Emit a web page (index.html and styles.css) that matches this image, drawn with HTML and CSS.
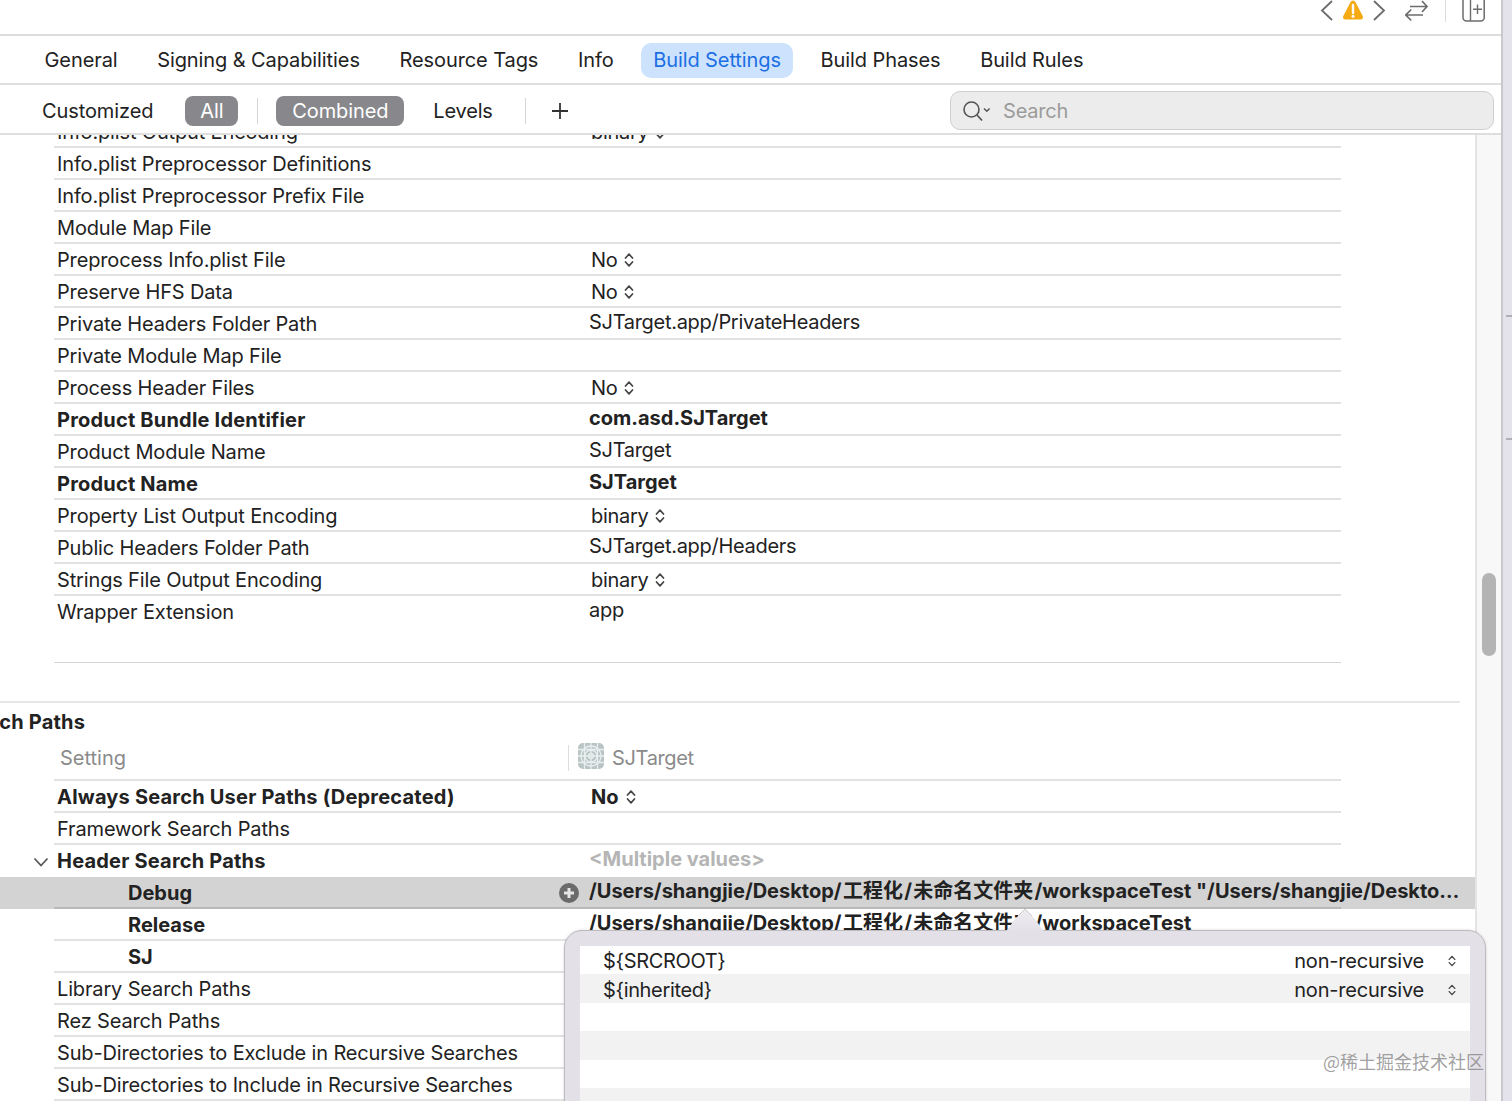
FILE: index.html
```html
<!DOCTYPE html>
<html lang="en">
<head>
<meta charset="utf-8">
<title>Build Settings</title>
<link rel="stylesheet" href="styles.css">
</head>
<body>
<svg class="defs" width="0" height="0" aria-hidden="true">
  <symbol id="updown" viewBox="0 0 10 16"><path d="M1.500 6 5 2.200 8.500 6M1.500 10 5 13.800 8.500 10" fill="none" stroke="currentColor" stroke-width="1.700" stroke-linecap="round" stroke-linejoin="round"/></symbol>
</svg>
<div class="page">
  <div class="editor">
    <header class="topbar">
      <svg class="ti" width="14" height="22" viewBox="0 0 14 22"><path d="M12 1 2 10.500 12 20" fill="none" stroke="#6c6c6c" stroke-width="1.800"/></svg>
      <svg class="ti warn" width="22" height="22" viewBox="0 0 22 22"><path d="M11 .500C9.800.500 9 1.200 8.300 2.500L1.300 16c-.8 1.700.2 3.500 2 3.500h15.400c1.800 0 2.800-1.800 2-3.500L13.700 2.500C13 1.200 12.200.500 11 .500Z" fill="#f5a913"/><path d="M11 5v8" stroke="#fff" stroke-width="2.400" stroke-linecap="round"/><circle cx="11" cy="16.200" r="1.500" fill="#fff"/></svg>
      <svg class="ti" width="14" height="22" viewBox="0 0 14 22"><path d="M2 1 12 10.500 2 20" fill="none" stroke="#6c6c6c" stroke-width="1.800"/></svg>
      <svg class="ti swap" width="24" height="24" viewBox="0 0 24 24"><path d="M5 6.500H22M17 1l5 5.500-5 5.500M.8 15H18M6.300 9.500.8 15l5.500 5.500" fill="none" stroke="#6c6c6c" stroke-width="1.700"/></svg>
      <span class="ti-div"></span>
      <svg class="ti add" width="24" height="24" viewBox="0 0 24 24"><rect x="2" y="-4" width="21.200" height="25" rx="3.500" fill="none" stroke="#6c6c6c" stroke-width="1.500"/><path d="M9.500 0v21M16.500 4.500v9.500M12 9.200h9" fill="none" stroke="#6c6c6c" stroke-width="1.400"/></svg>
    </header>
    <nav class="tabs">
      <a class="tab">General</a>
      <a class="tab">Signing &amp; Capabilities</a>
      <a class="tab">Resource Tags</a>
      <a class="tab">Info</a>
      <a class="tab active">Build Settings</a>
      <a class="tab">Build Phases</a>
      <a class="tab">Build Rules</a>
    </nav>
    <div class="filters">
      <span class="f f-custom">Customized</span>
      <span class="f pill p-all">All</span>
      <span class="fdiv d1"></span>
      <span class="f pill p-comb">Combined</span>
      <span class="f f-levels">Levels</span>
      <span class="fdiv d2"></span>
      <svg class="plus" width="18" height="18" viewBox="0 0 18 18"><path d="M9 1v16M1 9h16" stroke="#333" stroke-width="1.800"/></svg>
      <div class="search">
        <svg width="30" height="24" viewBox="0 0 30 24"><circle cx="9.500" cy="10.500" r="7.500" fill="none" stroke="#555" stroke-width="1.600"/><path d="m15 16 5 5.500" stroke="#555" stroke-width="1.800"/><path d="m22 9.500 2.800 2.800 2.800-2.800" fill="none" stroke="#555" stroke-width="1.500"/></svg>
        <span>Search</span>
      </div>
    </div>
    <div class="main">
      <div class="scroll">
        <div class="rows first">
          <div class="row"><div class="n">Info.plist Output Encoding</div><div class="v pop">binary <svg class="ud"><use href="#updown"/></svg></div></div>
          <div class="row"><div class="n">Info.plist Preprocessor Definitions</div><div class="v"></div></div>
          <div class="row"><div class="n">Info.plist Preprocessor Prefix File</div><div class="v"></div></div>
          <div class="row"><div class="n">Module Map File</div><div class="v"></div></div>
          <div class="row"><div class="n">Preprocess Info.plist File</div><div class="v pop">No <svg class="ud"><use href="#updown"/></svg></div></div>
          <div class="row"><div class="n">Preserve HFS Data</div><div class="v pop">No <svg class="ud"><use href="#updown"/></svg></div></div>
          <div class="row"><div class="n">Private Headers Folder Path</div><div class="v">SJTarget.app/PrivateHeaders</div></div>
          <div class="row"><div class="n">Private Module Map File</div><div class="v"></div></div>
          <div class="row"><div class="n">Process Header Files</div><div class="v pop">No <svg class="ud"><use href="#updown"/></svg></div></div>
          <div class="row b"><div class="n">Product Bundle Identifier</div><div class="v">com.asd.SJTarget</div></div>
          <div class="row"><div class="n">Product Module Name</div><div class="v">SJTarget</div></div>
          <div class="row b"><div class="n">Product Name</div><div class="v">SJTarget</div></div>
          <div class="row"><div class="n">Property List Output Encoding</div><div class="v pop">binary <svg class="ud"><use href="#updown"/></svg></div></div>
          <div class="row"><div class="n">Public Headers Folder Path</div><div class="v">SJTarget.app/Headers</div></div>
          <div class="row"><div class="n">Strings File Output Encoding</div><div class="v pop">binary <svg class="ud"><use href="#updown"/></svg></div></div>
          <div class="row last"><div class="n">Wrapper Extension</div><div class="v">app</div></div>
        </div>
        <div class="list-end"></div>
        <section class="section">
          <h2 class="sec-title">Search Paths</h2>
          <div class="head">
            <div class="h-name">Setting</div>
            <div class="h-val">
              <svg class="appicon" width="26" height="26" viewBox="0 0 26 26"><rect width="26" height="26" rx="5" fill="#b9c4c4"/><g fill="none" stroke="#e8eeee" stroke-width="1.300"><circle cx="13" cy="13" r="10"/><circle cx="13" cy="13" r="6"/><circle cx="13" cy="13" r="2.500"/><path d="M0 6.500h26M0 13h26M0 19.500h26M6.500 0v26M13 0v26M19.500 0v26"/></g></svg>
              <span>SJTarget</span>
            </div>
          </div>
          <div class="row b"><div class="n">Always Search User Paths (Deprecated)</div><div class="v pop">No <svg class="ud"><use href="#updown"/></svg></div></div>
          <div class="row"><div class="n">Framework Search Paths</div><div class="v"></div></div>
          <div class="row b noline">
            <svg class="disc" width="16" height="10" viewBox="0 0 16 10"><path d="m1.500 1.500 6.500 7 6.500-7" fill="none" stroke="#555" stroke-width="1.700"/></svg>
            <div class="n">Header Search Paths</div><div class="v multi">&lt;Multiple values&gt;</div>
          </div>
          <div class="hl">
            <div class="row b sub wide">
              <div class="n"><span>Debug</span><svg class="addc" width="20" height="20" viewBox="0 0 20 20"><circle cx="10" cy="10" r="10" fill="#6b6b6b"/><path d="M10 5v10M5 10h10" stroke="#e6e6e6" stroke-width="3"/></svg></div>
              <div class="v clip">/Users/shangjie/Desktop/<span class="cjk">工程化</span>/<span class="cjk">未命名文件夹</span>/workspaceTest "/Users/shangjie/Desktop/工程化/未命名文件夹/workspaceTest"</div>
            </div>
          </div>
          <div class="row b sub"><div class="n">Release</div><div class="v">/Users/shangjie/Desktop/<span class="cjk">工程化</span>/<span class="cjk">未命名文件夹</span>/workspaceTest</div></div>
          <div class="row b sub"><div class="n">SJ</div><div class="v"></div></div>
          <div class="row"><div class="n">Library Search Paths</div><div class="v"></div></div>
          <div class="row"><div class="n">Rez Search Paths</div><div class="v"></div></div>
          <div class="row"><div class="n">Sub-Directories to Exclude in Recursive Searches</div><div class="v"></div></div>
          <div class="row"><div class="n">Sub-Directories to Include in Recursive Searches</div><div class="v"></div></div>
        </section>
      </div>
      <div class="track"><div class="thumb"></div></div>
    </div>
    <div class="popover">
      <svg class="arrow" width="44" height="24" viewBox="0 0 44 24"><defs><linearGradient id="ag" x1="0" y1="0" x2="0" y2="1"><stop offset="0" stop-color="#efecf0"/><stop offset="1" stop-color="#e4e0e8"/></linearGradient></defs><path d="M0 24C5 24 8 16 11 12L22 1 33 12C36 16 39 24 44 24Z" fill="url(#ag)"/><path d="M15 8 22 1 29 8" fill="none" stroke="#c9c9cb" stroke-width="1"/></svg>
      <div class="plist">
        <div class="pr"><span class="pn">${SRCROOT}</span><span class="rec">non-recursive</span><svg class="ud2"><use href="#updown"/></svg></div>
        <div class="pr"><span class="pn">${inherited}</span><span class="rec">non-recursive</span><svg class="ud2"><use href="#updown"/></svg></div>
        <div class="pr"></div>
        <div class="pr"></div>
        <div class="pr"></div>
        <div class="pr"></div>
      </div>
    </div>
  </div>
  <aside class="strip"><i class="t1"></i><i class="t2"></i></aside>
</div>
<div class="watermark">@稀土掘金技术社区</div>
</body>
</html>
```
FILE: styles.css
```css
* { box-sizing: border-box; }
html, body { margin: 0; height: 100%; overflow: hidden; background: #fff; }
body { font-family: Inter, "Noto Sans CJK SC", sans-serif; font-size: 20px; color: #222; position: relative; }
.defs { position: absolute; }
.page { display: flex; width: 1512px; height: 1101px; overflow: hidden; }
.editor { width: 1501px; height: 1101px; display: flex; flex-direction: column; position: relative; overflow: visible; }
.strip { width: 11px; background: #e4e2ea; border-left: 2px solid #c9c9cc; position: relative; flex: none; }
.strip i { position: absolute; left: 3px; width: 6px; height: 2px; background: #b0b0b4; }
.strip .t1 { top: 315px; }
.strip .t2 { top: 438px; }

.topbar { height: 36px; border-bottom: 2px solid #dcdcdc; display: flex; align-items: flex-start; padding-right: 16px; justify-content: flex-end; flex: none; overflow: hidden; }
.ti { flex: none; display: block; }
.ti-div { width: 1px; height: 22px; background: #ddd; margin-left: 16px; margin-right: 15px; }
.warn { margin: 0 8px; }
.swap { margin-left: 19px; }

.tabs { height: 49px; border-bottom: 2px solid #e0e0e0; display: flex; align-items: center; padding: 2px 0 0 32px; gap: 14.600px; flex: none; letter-spacing: -.09px; }
.tab { padding: 0 12.500px; height: 35px; line-height: 35px; border-radius: 10px; color: #222; white-space: nowrap; }
.tab.active { background: #cde3fd; color: #1c6fe3; }

.filters { height: 50px; border-bottom: 2px solid #dedede; display: flex; align-items: center; flex: none; padding: 4px 0 0 42px; letter-spacing: -.1px; }
.f { white-space: nowrap; }
.pill { height: 30px; line-height: 30px; border-radius: 8px; background: #88888c; color: #fff; text-align: center; }
.p-all { width: 53px; margin-left: 32px; }
.p-comb { width: 128px; }
.fdiv { width: 1px; height: 26px; background: #d6d6d6; }
.d1 { margin: 0 18px 0 19px; }
.d2 { margin-left: 32px; }
.f-levels { margin-left: 29px; letter-spacing: -.2px; }
.plus { margin-left: 25px; }
.search { margin: -2px 7px 0 auto; width: 544px; height: 39px; border: 1px solid #cfcfcf; border-radius: 10px; background: #ececec; display: flex; align-items: center; padding: 1px 0 0 11px; gap: 11px; color: #9b9b9b; letter-spacing: -.2px; }

.main { flex: 1; display: flex; min-height: 0; }
.scroll { width: 1475px; overflow: hidden; flex: none; }
.track { width: 26px; flex: none; background: #f8f8f8; border-left: 2px solid #e4e4e4; padding: 438px 0 0 5px; }
.thumb { width: 14px; height: 83px; border-radius: 7px; background: #b4b4b4; }

.rows.first { margin-top: -19px; }
.row { display: flex; position: relative; width: 1287px; height: 32px; margin-left: 54px; border-bottom: 2px solid #e2e2e2; }
.row.last { border-bottom: 0; }
.row.noline { border-bottom: 0; }
.n { width: 535px; flex: none; padding-left: 3px; line-height: 33px; white-space: nowrap; letter-spacing: -.15px; }
.v { flex: 1; min-width: 0; line-height: 29px; white-space: nowrap; letter-spacing: -.3px; }
.v.pop { padding: 2px 0 0 2px; display: flex; align-items: center; gap: 7px; }
.ud { width: 10px; height: 16px; color: #444; }
.b .n { font-weight: 700; letter-spacing: .2px; }
.b .v { font-weight: 700; letter-spacing: 0; }
.sub.b .n { letter-spacing: 0; }
.multi { color: #b5b5b5; }
.disc { position: absolute; left: -21px; top: 12px; }
.sub .n { padding-left: 74px; }
.cjk { margin: 0 1.300px; }
.hl { background: #d3d3d3; height: 32px; width: 1475px; }
.wide { width: 1421px; border-bottom: 0; }
.wide::after { content: ""; position: absolute; left: 0; bottom: 0; width: 1287px; height: 2px; background: #b9b9b9; }
.wide .n { display: flex; justify-content: space-between; align-items: center; padding-right: 10px; }
.clip { overflow: hidden; text-overflow: ellipsis; padding-right: 14px; }

.list-end { width: 1287px; margin: 34px 0 0 54px; border-top: 1.500px solid #d6d6d6; }
.section { margin-top: 38px; border-top: 2px solid #e6e6e6; width: 1460px; }
.sec-title { margin: 0 0 0 -46px; height: 37px; font-size: 20px; line-height: 38px; font-weight: 700; letter-spacing: .2px; white-space: nowrap; }
.head { display: flex; width: 1287px; height: 41px; margin-left: 54px; border-bottom: 2px solid #e2e2e2; color: #8a8a8a; }
.h-name { width: 514px; padding-left: 6px; line-height: 36px; }
.h-val { display: flex; align-items: center; gap: 8px; border-left: 1px solid #ddd; height: 26px; margin-top: 5px; padding-left: 9px; letter-spacing: -.35px; }
.appicon { flex: none; margin-top: -4px; }
.section .row { flex: none; }
.hl .row { margin-left: 54px; }

.popover { position: absolute; left: 564px; top: 930px; width: 922px; height: 200px; background: #e4e0e8; border: 1px solid #bdbbc0; border-radius: 18px; padding: 15px 15px 0; box-shadow: 0 0 3px rgba(0,0,0,.15); }
.arrow { position: absolute; left: 438px; top: -23px; }
.plist { background: #fff; }
.pr { height: 28.400px; display: flex; align-items: center; padding: 2px 14px 0 23px; }
.pr:nth-child(even) { background: #f2f2f2; }
.pn { letter-spacing: -.35px; }
.rec { margin-left: auto; margin-right: 24px; letter-spacing: -.2px; }
.ud2 { width: 8px; height: 14px; color: #444; }
.watermark { position: absolute; left: 1323px; top: 1049px; font-family: "Noto Sans CJK SC", sans-serif; font-size: 18px; line-height: 24px; color: rgba(120,120,120,.7); white-space: nowrap; }
```
